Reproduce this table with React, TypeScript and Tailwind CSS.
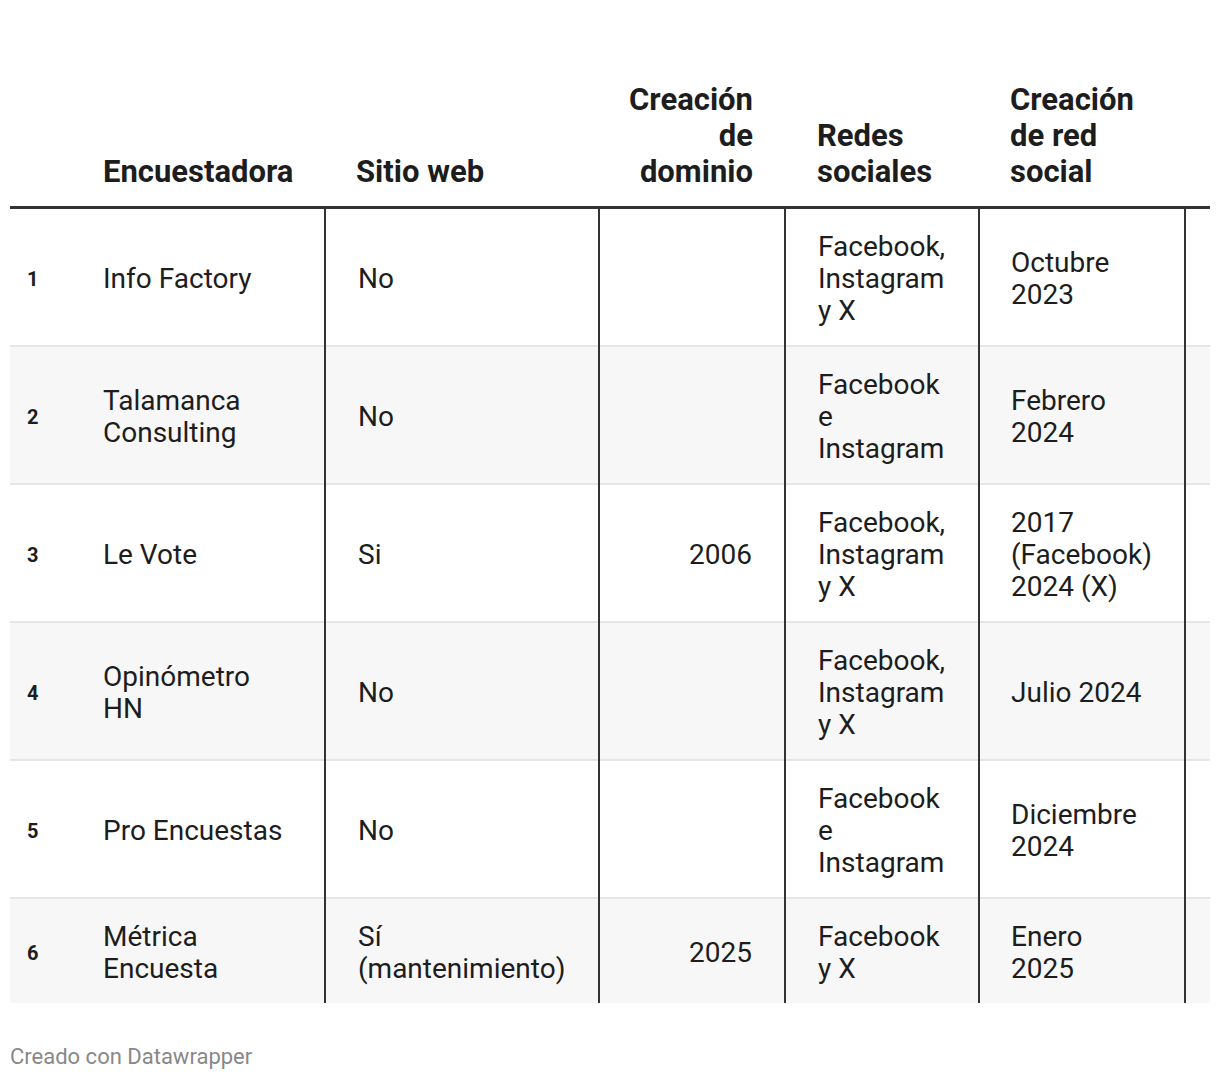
import React from "react";

type Row = {
  n: number;
  name: string[];
  web: string[];
  domain: string;
  social: string[];
  created: string[];
};

const rows: Row[] = [
  { n: 1, name: ["Info Factory"], web: ["No"], domain: "", social: ["Facebook,", "Instagram", "y X"], created: ["Octubre", "2023"] },
  { n: 2, name: ["Talamanca", "Consulting"], web: ["No"], domain: "", social: ["Facebook", "e", "Instagram"], created: ["Febrero", "2024"] },
  { n: 3, name: ["Le Vote"], web: ["Si"], domain: "2006", social: ["Facebook,", "Instagram", "y X"], created: ["2017", "(Facebook)", "2024 (X)"] },
  { n: 4, name: ["Opinómetro", "HN"], web: ["No"], domain: "", social: ["Facebook,", "Instagram", "y X"], created: ["Julio 2024"] },
  { n: 5, name: ["Pro Encuestas"], web: ["No"], domain: "", social: ["Facebook", "e", "Instagram"], created: ["Diciembre", "2024"] },
  { n: 6, name: ["Métrica", "Encuesta"], web: ["Sí", "(mantenimiento)"], domain: "2025", social: ["Facebook", "y X"], created: ["Enero", "2025"] },
];

function Lines({ items }: { items: string[] }) {
  return (
    <>
      {items.map((t, i) => (
        <div key={i} className="whitespace-nowrap">{t}</div>
      ))}
    </>
  );
}

export default function App() {
  return (
    <div className="bg-white min-h-[1080px] pt-[82px] px-[10px] text-[#1d1d1d]" style={{ fontFamily: "Roboto, sans-serif" }}>
      <table className="table-fixed border-collapse w-[1200px]">
        <colgroup>
          <col className="w-[77px]" />
          <col className="w-[238px]" />
          <col className="w-[274px]" />
          <col className="w-[186px]" />
          <col className="w-[194px]" />
          <col className="w-[206px]" />
          <col className="w-[25px]" />
        </colgroup>
        <thead>
          <tr className="border-b-[3px] border-[#333333] text-[31px] leading-[36px] font-bold align-bottom">
            <th className="pb-[16px]"></th>
            <th className="pb-[16px] pl-[16px] text-left font-bold whitespace-nowrap">Encuestadora</th>
            <th className="pb-[16px] pl-[31px] text-left font-bold whitespace-nowrap">Sitio web</th>
            <th className="pb-[16px] pr-[32px] text-right font-bold whitespace-nowrap">
              Creación
              <br />
              de
              <br />
              dominio
            </th>
            <th className="pb-[16px] pl-[32px] text-left font-bold whitespace-nowrap">
              Redes
              <br />
              sociales
            </th>
            <th className="pb-[16px] pl-[31px] text-left font-bold whitespace-nowrap">
              Creación
              <br />
              de red
              <br />
              social
            </th>
            <th className="pb-[16px]"></th>
          </tr>
        </thead>
        <tbody>
          {rows.map((r, i) => (
            <tr
              key={r.n}
              className={`text-[28px] leading-[32px] align-middle ${i % 2 === 1 ? "bg-[#f7f7f7]" : "bg-white"} ${i < rows.length - 1 ? "border-b-2 border-[#e6e6e6]" : ""}`}
            >
              <td className="pt-[22px] pb-[18px] pl-[17px] text-[20px] font-bold">{r.n}</td>
              <td className="pt-[22px] pb-[18px] pl-[16px]">
                <Lines items={r.name} />
              </td>
              <td className="pt-[22px] pb-[18px] pl-[32px] border-l-2 border-l-[#333333]">
                <Lines items={r.web} />
              </td>
              <td className="pt-[22px] pb-[18px] pr-[32px] text-right border-l-2 border-l-[#333333]">{r.domain}</td>
              <td className="pt-[22px] pb-[18px] pl-[32px] border-l-2 border-l-[#333333]">
                <Lines items={r.social} />
              </td>
              <td className="pt-[22px] pb-[18px] pl-[31px] border-l-2 border-l-[#333333]">
                <Lines items={r.created} />
              </td>
              <td className="border-l-2 border-l-[#333333]"></td>
            </tr>
          ))}
        </tbody>
      </table>
      <div className="mt-[41px] text-[22px] leading-[26px] text-[#888888]">Creado con Datawrapper</div>
    </div>
  );
}
